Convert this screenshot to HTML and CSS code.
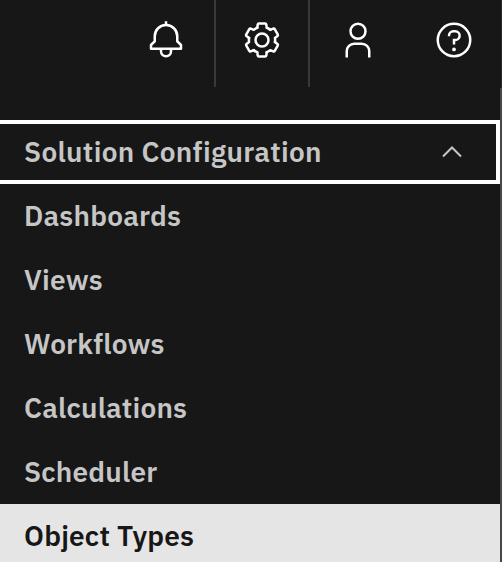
FILE: index.html
```html
<!DOCTYPE html>
<html lang="en">
<head>
<meta charset="utf-8">
<title>Solution Configuration</title>
<link rel="stylesheet" href="styles.css">
</head>
<body>
<header class="toolbar">
  <button class="action" aria-label="Notifications"><svg viewBox="0 0 32 32"><path d="M28.707 19.293 26 16.586V13a10.014 10.014 0 0 0-9-9.95V1h-2v2.05A10.014 10.014 0 0 0 6 13v3.586l-2.707 2.707A1 1 0 0 0 3 20v3a1 1 0 0 0 1 1h7v1a5 5 0 0 0 10 0v-1h7a1 1 0 0 0 1-1v-3a1 1 0 0 0-.293-.707ZM19 25a3 3 0 0 1-6 0v-1h6Zm8-3H5v-1.586l2.707-2.707A1 1 0 0 0 8 17v-4a8 8 0 0 1 16 0v4a1 1 0 0 0 .293.707L27 20.414Z"/></svg></button>
  <button class="action action-current" aria-label="Settings"><svg class="line" viewBox="-20 -20 40 40"><defs><path id="tooth" d="M-4.700-12.200-4.300-15.400Q-4.100-16.400-3-16.400H3Q4.100-16.400 4.300-15.400L4.700-12.200Q6.500-11.700 8.200-10.200"/></defs><use href="#tooth"/><use href="#tooth" transform="rotate(60)"/><use href="#tooth" transform="rotate(120)"/><use href="#tooth" transform="rotate(180)"/><use href="#tooth" transform="rotate(240)"/><use href="#tooth" transform="rotate(300)"/><circle r="6.500"/></svg></button>
  <button class="action" aria-label="User"><svg viewBox="0 0 32 32"><path d="M16 4a5 5 0 1 1-5 5 5 5 0 0 1 5-5m0-2a7 7 0 1 0 7 7 7 7 0 0 0-7-7ZM26 30h-2v-5a5 5 0 0 0-5-5h-6a5 5 0 0 0-5 5v5H6v-5a7 7 0 0 1 7-7h6a7 7 0 0 1 7 7Z"/></svg></button>
  <button class="action" aria-label="Help"><svg viewBox="0 0 32 32"><path d="M16 2a14 14 0 1 0 14 14A14 14 0 0 0 16 2Zm0 26a12 12 0 1 1 12-12 12 12 0 0 1-12 12Z"/><circle cx="16" cy="23.5" r="1.5"/><path d="M17 8h-1.500A4.490 4.490 0 0 0 11 12.500V13h2v-.5a2.500 2.500 0 0 1 2.500-2.500H17a2.500 2.500 0 0 1 0 5h-2v4.500h2V17a4.500 4.500 0 0 0 0-9Z"/></svg></button>
</header>
<nav class="panel">
  <button class="item group"><span>Solution Configuration</span><svg class="chevron" viewBox="0 0 20 12"><path d="M1 10.500 10 1.500 19 10.500"/></svg></button>
  <a class="item">Dashboards</a>
  <a class="item">Views</a>
  <a class="item">Workflows</a>
  <a class="item">Calculations</a>
  <a class="item">Scheduler</a>
  <a class="item selected">Object Types</a>
</nav>
</body>
</html>
```
FILE: styles.css
```css
* { box-sizing: border-box; }
body { margin: 0; width: 502px; height: 562px; overflow: hidden; background: #171717; }
button { appearance: none; margin: 0; padding: 0; border: 0; background: none; }
.toolbar { display: flex; justify-content: flex-end; height: 88px; padding-bottom: 1px; border-right: 1px solid #2b2b2b; }
.action { display: flex; justify-content: center; width: 96px; padding-top: 20px; }
.action:last-child { margin-right: -1px; }
.action-current { border: solid #393939; border-width: 0 2px; }
.action svg { display: block; width: 40px; height: 40px; flex: none; fill: #fff; }
.action svg.line { fill: none; stroke: #fff; stroke-width: 2.5; stroke-linejoin: round; stroke-linecap: round; }
.panel { height: 474px; padding-top: 32px; border-right: 2px solid #474747; }
.item { display: flex; align-items: center; justify-content: space-between; width: 500px; height: 64px; padding: 0 38px 0 24px; color: #c6c6c6; font: 600 28px/36px "IBM Plex Sans", "Noto Sans", sans-serif; letter-spacing: .2px; white-space: nowrap; }
.group { padding-right: 34px; border: solid #fff; border-width: 4px 4px 4px 0; letter-spacing: .32px; }
.chevron { width: 20px; height: 12px; fill: none; stroke: #c6c6c6; stroke-width: 2; }
.selected { background: #e5e5e5; color: #171717; }
```
